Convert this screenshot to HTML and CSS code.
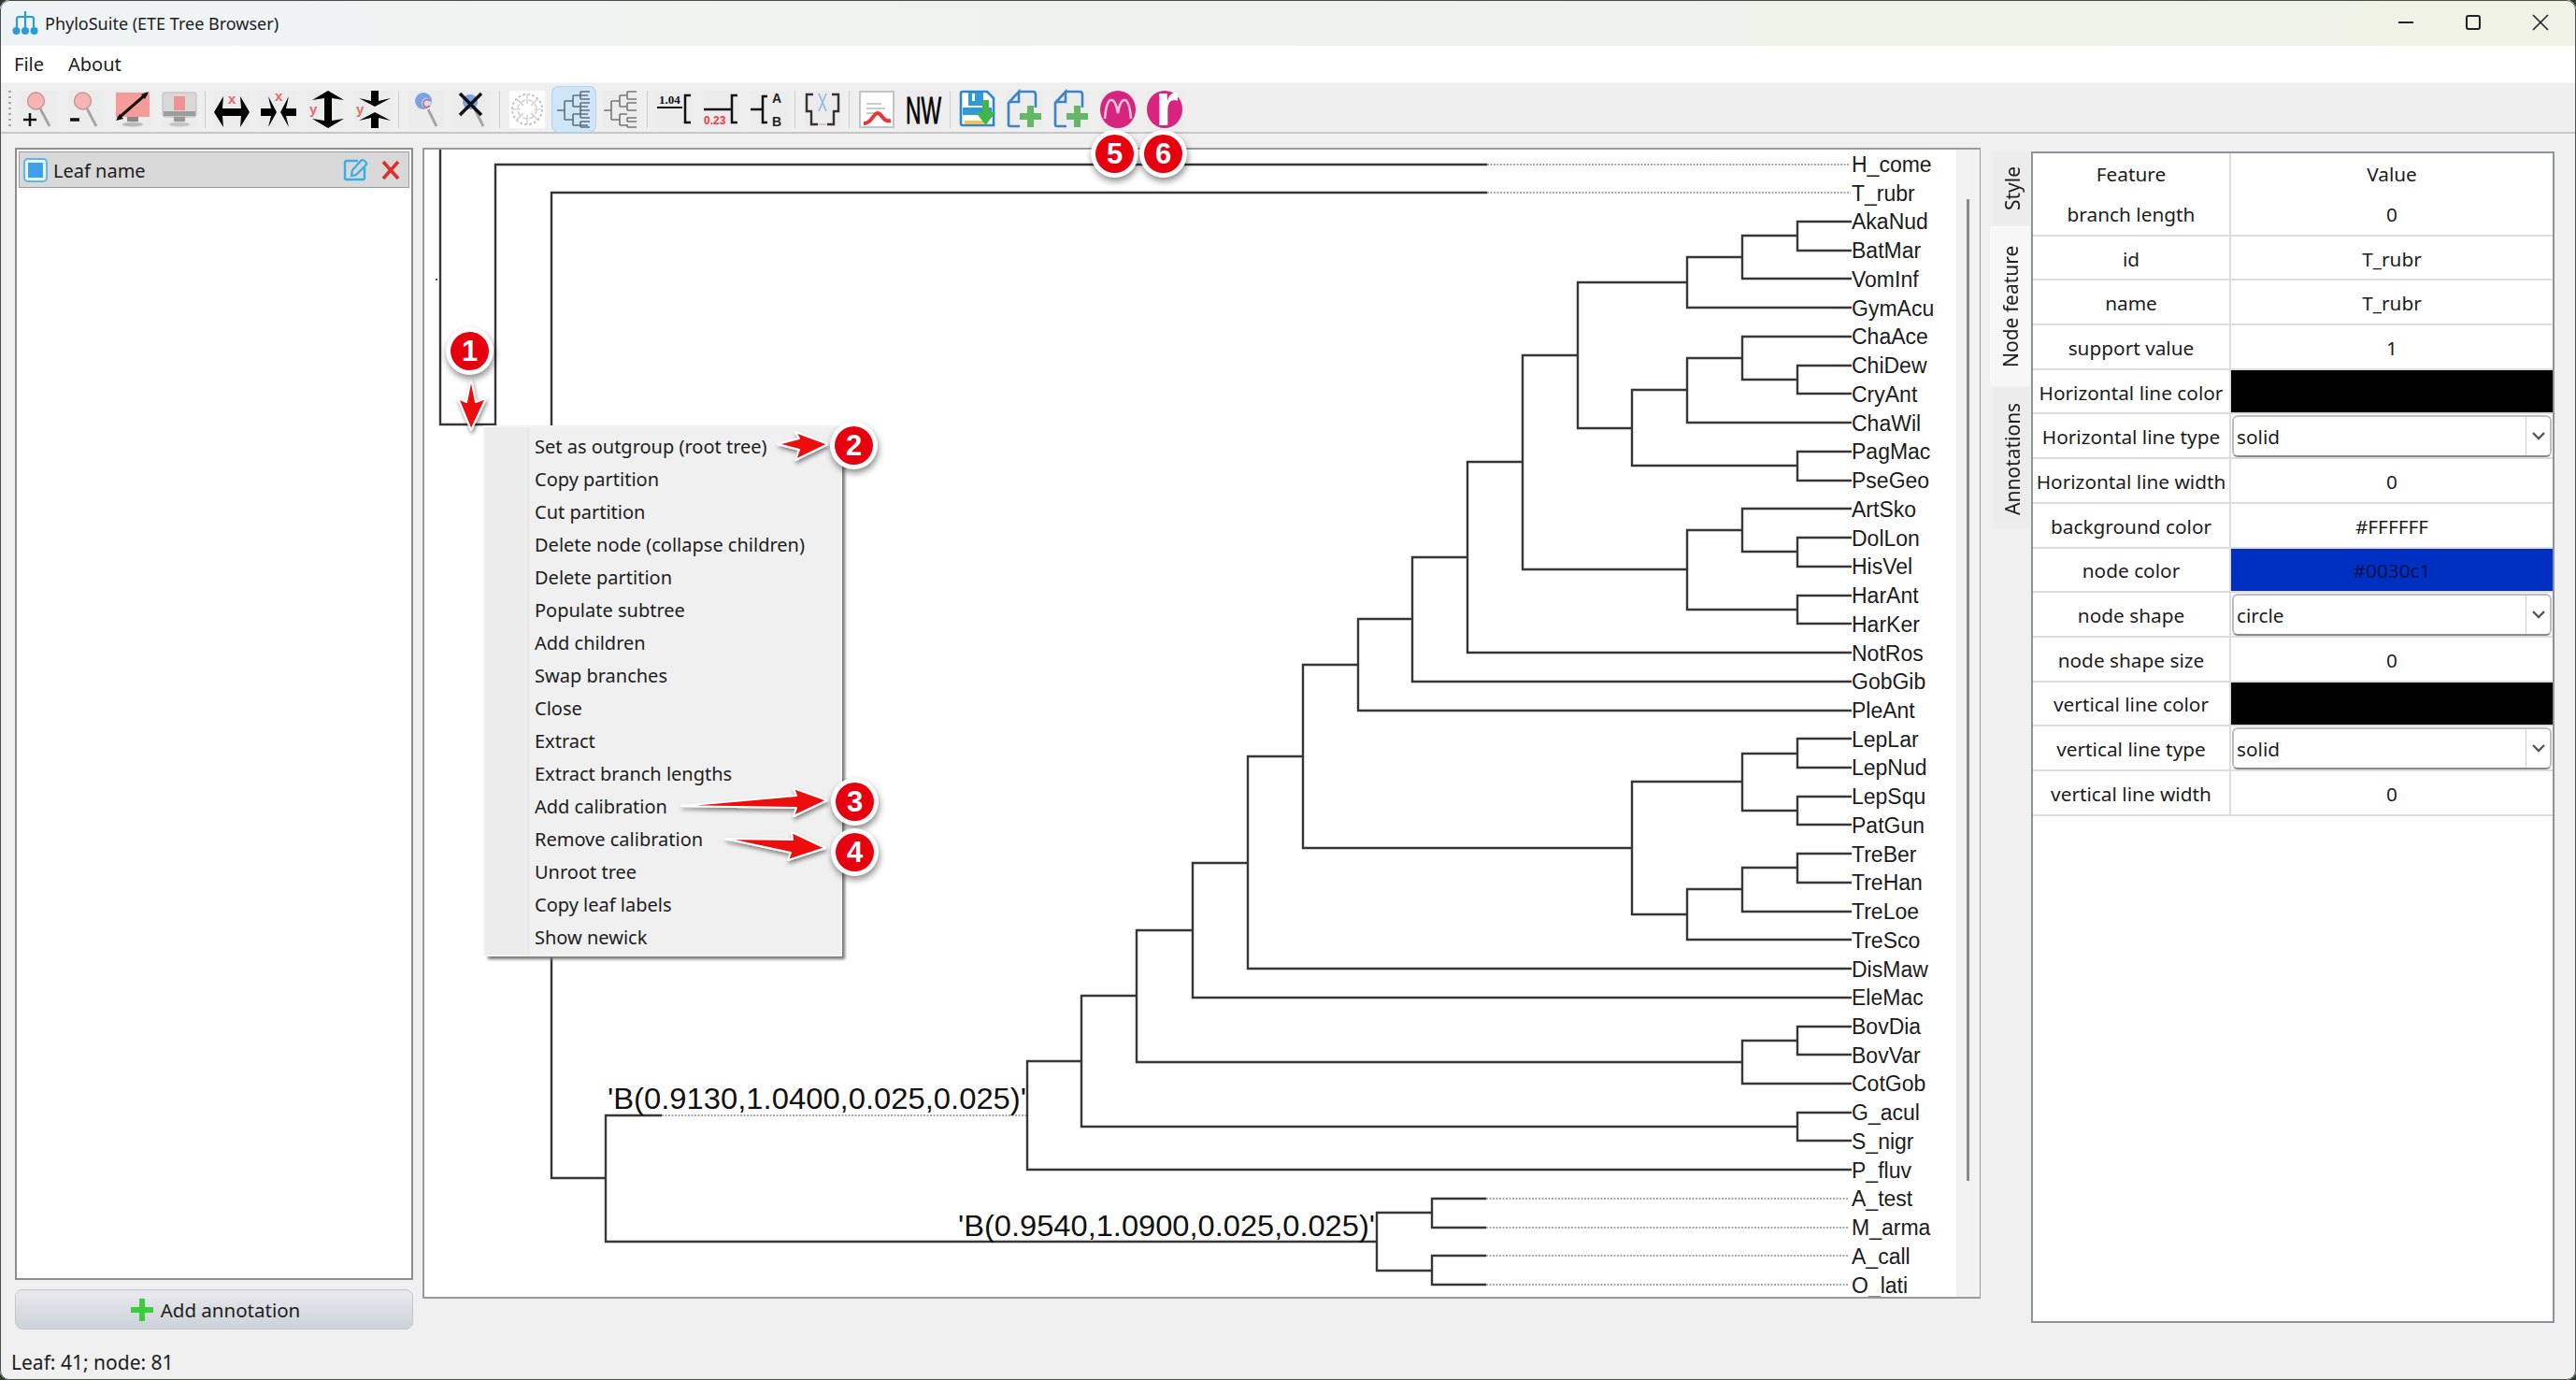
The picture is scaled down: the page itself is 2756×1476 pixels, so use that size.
FILE: index.html
```html
<!DOCTYPE html>
<html lang="en">
<head>
<meta charset="utf-8">
<title>PhyloSuite (ETE Tree Browser)</title>
<link rel="stylesheet" href="styles.css">
</head>
<body>
<div class="window">
  <header class="titlebar">
    <svg class="appicon" viewBox="0 0 28 26" width="28" height="26"><path d="M14 0V5M5 12V8Q5 6 7 6H21Q23 6 23 8V12M5 12V17M14 6V17M23 12V17" fill="none" stroke="#2f9ad8" stroke-width="2.2"/><circle cx="4.5" cy="21" r="4" fill="#2f9ad8"/><circle cx="14" cy="21" r="4" fill="#2f9ad8"/><circle cx="23.5" cy="21" r="4" fill="#2f9ad8"/></svg>
    <span class="title">PhyloSuite (ETE Tree Browser)</span>
    <div class="winbtns">
      <svg viewBox="0 0 18 18" width="18" height="18"><path d="M1 9H17" stroke="#222" stroke-width="2"/></svg>
      <svg viewBox="0 0 18 18" width="18" height="18"><rect x="2" y="2" width="14" height="14" rx="2" fill="none" stroke="#222" stroke-width="2"/></svg>
      <svg viewBox="0 0 18 18" width="18" height="18"><path d="M1 1L17 17M17 1L1 17" stroke="#222" stroke-width="1.6"/></svg>
    </div>
  </header>
  <nav class="menubar"><span>File</span><span>About</span></nav>
  <div class="toolbar">
    <div class="grip"></div>
    <svg class="ico" viewBox="0 0 38 40"><path d="M20 19L30 38" stroke="#a4a4a4" stroke-width="2.8"/><circle cx="15.5" cy="11" r="9" fill="#f8b4b0" stroke="#c99492" stroke-width="1.4"/><path d="M9 24V38M2 31H16" stroke="#111" stroke-width="2.5"/></svg>
    <svg class="ico" viewBox="0 0 38 40"><path d="M20 19L30 38" stroke="#a4a4a4" stroke-width="2.8"/><circle cx="15.5" cy="11" r="9" fill="#f8b4b0" stroke="#c99492" stroke-width="1.4"/><path d="M2 31H12" stroke="#111" stroke-width="3.5"/></svg>
    <svg class="ico" viewBox="0 0 38 40"><rect x="1" y="2" width="36" height="26" fill="#f59c9a"/><rect x="13" y="28" width="12" height="5" fill="#888"/><ellipse cx="19" cy="36" rx="11" ry="2.5" fill="#bbb"/><path d="M3 30L34 3" stroke="#111" stroke-width="3"/><path d="M1 32L9 30L5 25ZM36 1L28 4L32 9Z" fill="#111"/></svg>
    <svg class="ico" viewBox="0 0 38 40"><rect x="1" y="2" width="36" height="26" rx="2" fill="#d8d8d8" stroke="#bbb"/><rect x="13" y="6" width="12" height="15" fill="#ef9493"/><rect x="2" y="22" width="34" height="5" fill="#9c9c9c"/><rect x="13" y="28" width="12" height="5" fill="#999"/><ellipse cx="19" cy="36" rx="11" ry="2.5" fill="#c4c4c4"/></svg>
    <div class="sep tight"></div>
    <svg class="ico" viewBox="0 0 38 40"><path d="M0 23L10 6L9 19H29L28 6L38 23L28 39L29 27H9L10 39Z" fill="#000"/><text class="glyph" x="15" y="14" fill="#e26a6a">x</text></svg>
    <svg class="ico" viewBox="0 0 38 40"><path d="M0 19H11L8 6L17 23L8 39L11 27H0ZM38 19H27L30 6L21 23L30 39L27 27H38Z" fill="#000"/><text class="glyph" x="15" y="11" fill="#e26a6a">x</text></svg>
    <svg class="ico" viewBox="0 0 38 40"><path d="M22 0L5 10L18 8V32L5 30L22 40L39 30L26 32V8L39 10Z" fill="#000"/><text class="glyph" x="2" y="25" fill="#e26a6a">y</text></svg>
    <svg class="ico" viewBox="0 0 38 40"><path d="M18 0V11L5 8L22 17L39 8L26 11V0ZM18 40V29L5 32L22 23L39 32L26 29V40Z" fill="#000"/><text class="glyph" x="2" y="25" fill="#e26a6a">y</text></svg>
    <div class="sep"></div>
    <svg class="ico" viewBox="0 0 38 40"><path d="M21 20L30 38" stroke="#a4a4a4" stroke-width="2.8"/><circle cx="16" cy="11" r="9" fill="#7aa3e4"/><circle cx="19" cy="13" r="5" fill="#cfdcf3"/><path d="M23 11A4 4 0 1 0 23 16" fill="none" stroke="#d45a6a" stroke-width="1.5"/></svg>
    <svg class="ico" viewBox="0 0 38 40"><path d="M21 20L30 38" stroke="#a4a4a4" stroke-width="2.8"/><circle cx="16" cy="12" r="8" fill="#7aa3e4"/><path d="M5 3L28 26M28 3L5 26" stroke="#111" stroke-width="3.5"/></svg>
    <div class="sep"></div>
    <svg class="ico brain" viewBox="0 0 38 40"><circle cx="19" cy="20" r="16" fill="none" stroke="#c8c8c8" stroke-width="2" stroke-dasharray="3 2"/><circle cx="19" cy="20" r="10" fill="none" stroke="#cfcfcf" stroke-width="1.5" stroke-dasharray="5 3"/><path d="M19 4V14M19 26V36M3 20H12M26 20H35M8 9L15 16M30 9L23 16M8 31L15 24M30 31L23 24" stroke="#c8c8c8" stroke-width="1.2"/></svg>
    <svg class="ico sel" viewBox="0 0 38 40"><path d="M1 21H9M9 11V31M9 11H18M9 31H18M18 5V17M18 25V37M18 5H34M18 17H34M18 25H34M18 37H34M26 1V9M26 13V21M26 21V29M26 33V39M26 1H36M26 9H36M26 13H36M26 21H36M26 29H36M26 33H36M26 39H36" fill="none" stroke="#5f7078" stroke-width="1.6"/></svg>
    <svg class="ico" viewBox="0 0 38 40"><path d="M1 21H9M9 11V31M9 11H18M9 31H18M18 5V17M18 25V37M18 5H26M18 17H26M18 25H26M18 37H26M26 1V9M26 13V21M26 29V33M26 39V36M26 1H36M26 9H36M26 13H36M26 21H36M26 29H36M26 33H36M26 39H36" fill="none" stroke="#777" stroke-width="1.6"/></svg>
    <div class="sep"></div>
    <svg class="ico" viewBox="0 0 38 40"><text class="num" x="2" y="14">1.04</text><path d="M0 18H27" stroke="#111" stroke-width="2"/><path d="M36 5H30V34H36" fill="none" stroke="#111" stroke-width="2.5"/></svg>
    <svg class="ico" viewBox="0 0 38 40"><path d="M0 20H30" stroke="#111" stroke-width="2.5"/><text class="num red" x="0" y="36">0.23</text><path d="M36 5H30V34H36" fill="none" stroke="#111" stroke-width="2.5"/></svg>
    <svg class="ico" viewBox="0 0 38 40"><path d="M0 20H12M18 6H13V34H18" fill="none" stroke="#111" stroke-width="2.5"/><text class="ab" x="23" y="13">A</text><text class="ab" x="23" y="38">B</text></svg>
    <div class="sep"></div>
    <svg class="ico" viewBox="0 0 38 40"><path d="M9 4H2V22H7V36H14M29 4H36V22H31V36H24" fill="none" stroke="#333" stroke-width="2.4"/><path d="M15 3L23 22M23 3L15 22" stroke="#8ab8e8" stroke-width="1.6"/><path d="M15 36H23" stroke="#d8b8b8" stroke-width="1.5"/></svg>
    <div class="sep"></div>
    <svg class="ico" viewBox="0 0 38 40"><rect x="1" y="1" width="36" height="38" fill="#fff" stroke="#c4c4c4" stroke-width="2"/><path d="M8 14H24M8 19H28M8 24H20" stroke="#ccc" stroke-width="2"/><path d="M5 35C14 35 15 24 20 24C25 24 25 34 34 32" fill="none" stroke="#e8343a" stroke-width="4"/></svg>
    <svg class="ico" viewBox="0 0 38 40"><text class="nw" x="0" y="35" textLength="38" lengthAdjust="spacingAndGlyphs">NW</text></svg>
    <div class="sep"></div>
    <svg class="ico" viewBox="0 0 38 40"><path d="M3 1H29L36 8V37H3Q1 37 1 35V3Q1 1 3 1Z" fill="#fff" stroke="#2f86cc" stroke-width="2.6"/><rect x="9" y="2" width="16" height="14" fill="#2f9ad8"/><rect x="13" y="3" width="3" height="8" fill="#fff"/><rect x="3" y="18" width="31" height="8" fill="#2f9ad8"/><rect x="5" y="32" width="20" height="4" fill="#f3c25a"/><path d="M24 10H31V23H38L27.5 37L17 23H24Z" fill="#43b649"/></svg>
    <svg class="ico" viewBox="0 0 38 40"><path d="M13 1H28Q31 1 31 4V18M14 38H4Q2 38 2 36V13L13 1V12H2" fill="none" stroke="#3c84c6" stroke-width="2.6"/><path d="M22 16H29V24H37V31H29V39H22V31H14V24H22Z" fill="#62b768"/></svg>
    <svg class="ico" viewBox="0 0 38 40"><path d="M13 1H28Q31 1 31 4V18M14 38H4Q2 38 2 36V13L13 1V12H2" fill="none" stroke="#3c84c6" stroke-width="2.6"/><path d="M22 16H29V24H37V31H29V39H22V31H14V24H22Z" fill="#62b768"/></svg>
    <svg class="ico" viewBox="0 0 38 40"><ellipse cx="19" cy="20" rx="19" ry="20" fill="#d6247f"/><path d="M5 30C6 18 8 10 12 10C16 10 18 18 19 24C20 18 22 10 26 10C30 10 32 18 33 30" fill="none" stroke="#f4c6dc" stroke-width="2.6"/></svg>
    <svg class="ico" viewBox="0 0 38 40"><ellipse cx="19" cy="20" rx="19" ry="20" fill="#d6247f"/><text class="rlogo" x="9" y="37">r</text></svg>
  </div>

  <main class="main">
    <section class="leftcol">
      <div class="annolist">
        <div class="annorow">
          <span class="check"><i></i></span>
          <span class="annoname">Leaf name</span>
          <svg class="editicon" viewBox="0 0 27 24" width="27" height="24"><path d="M16 2H4Q2 2 2 4V20Q2 22 4 22H21Q23 22 23 20V9" fill="none" stroke="#36aee8" stroke-width="2.4"/><path d="M10 12L19 2Q21 0 24 3Q26 5 24 7L14 17L9 18Z" fill="none" stroke="#36aee8" stroke-width="2.2"/></svg>
          <svg class="delicon" viewBox="0 0 20 20" width="20" height="20"><path d="M2 1L18 19M18 1L2 19" stroke="#d9302b" stroke-width="3.6"/></svg>
        </div>
      </div>
      <button class="addbtn"><svg viewBox="0 0 26 26" width="26" height="26"><path d="M10 1H16V10H25V16H16V25H10V16H1V10H10Z" fill="#3ccc3c"/></svg>Add annotation</button>
    </section>

    <section class="treepanel">
      <svg class="tree" width="1639" height="1227" viewBox="454 160 1639 1227">
        <rect x="466" y="298" width="2" height="2" fill="#555"/>
        <path class="dots" d="M1591 176H1980M1591 206H1980M708 1193H1098M1590 1282H1978M1590 1313H1978M1590 1343H1978M1590 1374H1978"/>
        <path class="branches" d="M1981 237H1923V268H1981M1923 252H1864V298H1981M1864 275H1805V329H1981M1981 391H1923V421H1981M1981 360H1864V406H1923M1864 383H1805V452H1981M1981 483H1923V514H1981M1805 417H1746V498H1923M1805 302H1688V458H1746M1981 575H1923V606H1981M1981 544H1864V590H1923M1981 637H1923V667H1981M1864 567H1805V652H1923M1688 380H1629V609H1805M1629 494H1570V698H1981M1570 596H1511V729H1981M1511 662H1453V760H1981M1981 790H1923V821H1981M1981 852H1923V882H1981M1923 806H1864V867H1923M1981 913H1923V944H1981M1923 928H1864V975H1981M1864 951H1805V1005H1981M1864 836H1746V978H1805M1453 711H1394V907H1746M1394 809H1335V1036H1981M1335 923H1276V1067H1981M1981 1098H1923V1128H1981M1923 1113H1864V1159H1981M1276 995H1216V1136H1864M1981 1190H1923V1220H1981M1216 1065H1157V1205H1923M1157 1135H1099V1251H1981M1590 1282H1532V1313H1590M1590 1343H1532V1374H1590M1532 1297H1473V1359H1532M708 1193H648V1328H1473M1099 1193H1098M648 1260H590V206H1591M590 733H530V176H1591M530 454H471V160"/>
        <g class="leaves">
          <text x="1981" y="184">H_come</text><text x="1981" y="215">T_rubr</text><text x="1981" y="245">AkaNud</text><text x="1981" y="276">BatMar</text><text x="1981" y="307">VomInf</text><text x="1981" y="338">GymAcu</text><text x="1981" y="368">ChaAce</text><text x="1981" y="399">ChiDew</text><text x="1981" y="430">CryAnt</text><text x="1981" y="461">ChaWil</text><text x="1981" y="491">PagMac</text><text x="1981" y="522">PseGeo</text><text x="1981" y="553">ArtSko</text><text x="1981" y="584">DolLon</text><text x="1981" y="614">HisVel</text><text x="1981" y="645">HarAnt</text><text x="1981" y="676">HarKer</text><text x="1981" y="707">NotRos</text><text x="1981" y="737">GobGib</text><text x="1981" y="768">PleAnt</text><text x="1981" y="799">LepLar</text><text x="1981" y="829">LepNud</text><text x="1981" y="860">LepSqu</text><text x="1981" y="891">PatGun</text><text x="1981" y="922">TreBer</text><text x="1981" y="952">TreHan</text><text x="1981" y="983">TreLoe</text><text x="1981" y="1014">TreSco</text><text x="1981" y="1045">DisMaw</text><text x="1981" y="1075">EleMac</text><text x="1981" y="1106">BovDia</text><text x="1981" y="1137">BovVar</text><text x="1981" y="1167">CotGob</text><text x="1981" y="1198">G_acul</text><text x="1981" y="1229">S_nigr</text><text x="1981" y="1260">P_fluv</text><text x="1981" y="1290">A_test</text><text x="1981" y="1321">M_arma</text><text x="1981" y="1352">A_call</text><text x="1981" y="1383">O_lati</text>
        </g>
        <text class="calib" x="650" y="1186" textLength="448" lengthAdjust="spacingAndGlyphs">'B(0.9130,1.0400,0.025,0.025)'</text>
        <text class="calib" x="1025" y="1322" textLength="446" lengthAdjust="spacingAndGlyphs">'B(0.9540,1.0900,0.025,0.025)'</text>
      </svg>
      <div class="scrolltrack"><div class="scrollthumb"></div></div>
    </section>

    <aside class="rightcol">
      <div class="tabs">
        <div class="tab t-style">Style</div>
        <div class="tab t-node active">Node feature</div>
        <div class="tab t-anno">Annotations</div>
      </div>
      <div class="props">
        <div class="row head"><div class="k">Feature</div><div class="v">Value</div></div>
        <div class="row"><div class="k">branch length</div><div class="v">0</div></div>
        <div class="row"><div class="k">id</div><div class="v">T_rubr</div></div>
        <div class="row"><div class="k">name</div><div class="v">T_rubr</div></div>
        <div class="row"><div class="k">support value</div><div class="v">1</div></div>
        <div class="row"><div class="k">Horizontal line color</div><div class="v black"></div></div>
        <div class="row"><div class="k">Horizontal line type</div><div class="v boxed"><div class="combo"><span>solid</span><i class="drop"><svg viewBox="0 0 14 10" width="14" height="10"><path d="M1 2L7 8L13 2" fill="none" stroke="#555" stroke-width="2.4"/></svg></i></div></div></div>
        <div class="row"><div class="k">Horizontal line width</div><div class="v">0</div></div>
        <div class="row"><div class="k">background color</div><div class="v">#FFFFFF</div></div>
        <div class="row"><div class="k">node color</div><div class="v blue">#0030c1</div></div>
        <div class="row"><div class="k">node shape</div><div class="v boxed"><div class="combo"><span>circle</span><i class="drop"><svg viewBox="0 0 14 10" width="14" height="10"><path d="M1 2L7 8L13 2" fill="none" stroke="#555" stroke-width="2.4"/></svg></i></div></div></div>
        <div class="row"><div class="k">node shape size</div><div class="v">0</div></div>
        <div class="row"><div class="k">vertical line color</div><div class="v black"></div></div>
        <div class="row"><div class="k">vertical line type</div><div class="v boxed"><div class="combo"><span>solid</span><i class="drop"><svg viewBox="0 0 14 10" width="14" height="10"><path d="M1 2L7 8L13 2" fill="none" stroke="#555" stroke-width="2.4"/></svg></i></div></div></div>
        <div class="row"><div class="k">vertical line width</div><div class="v">0</div></div>
      </div>
    </aside>
  </main>

  <footer class="statusbar">Leaf: 41; node: 81</footer>

  <ul class="ctxmenu">
    <li>Set as outgroup (root tree)</li>
    <li>Copy partition</li>
    <li>Cut partition</li>
    <li>Delete node (collapse children)</li>
    <li>Delete partition</li>
    <li>Populate subtree</li>
    <li>Add children</li>
    <li>Swap branches</li>
    <li>Close</li>
    <li>Extract</li>
    <li>Extract branch lengths</li>
    <li>Add calibration</li>
    <li>Remove calibration</li>
    <li>Unroot tree</li>
    <li>Copy leaf labels</li>
    <li>Show newick</li>
  </ul>

  <svg class="arrows" width="2756" height="1476" viewBox="0 0 2756 1476">
    <defs><filter id="sh" x="-30%" y="-30%" width="160%" height="170%"><feDropShadow dx="1" dy="3" stdDeviation="2" flood-color="#000" flood-opacity=".45"/></filter></defs>
    <g filter="url(#sh)" fill="#ee0c0c" stroke="#fff" stroke-width="2" stroke-linejoin="round">
      <path d="M504 405L509 430L520 426L504 460L490 426L499 430Z"/>
      <path d="M832 475L855 469L851 462L886 475L851 492L855 481Z"/>
      <path d="M729 862L852 851L849 843L885 856L849 873L852 864Z"/>
      <path d="M776 897L848 898L847 890L883 907L843 920L846 912Z"/>
    </g>
  </svg>
  <span class="badge b1">1</span>
  <span class="badge b2">2</span>
  <span class="badge b3">3</span>
  <span class="badge b4">4</span>
  <span class="badge b5">5</span>
  <span class="badge b6">6</span>
</div>
</body>
</html>
```

FILE: styles.css
```css
* { box-sizing: border-box; }
html, body { margin: 0; height: 100%; }
body {
  background: #2c3a2e;
  overflow: hidden;
  font-family: "Noto Sans", "Open Sans", sans-serif;
  color: #1c1c1c;
  font-size: 20px;
}
.window {
  position: relative;
  height: 100vh;
  width: 100vw;
  display: flex;
  flex-direction: column;
  background: #f0f0f0;
  border-radius: 10px;
  overflow: hidden;
}
.window::after {
  content: "";
  position: absolute;
  inset: 0;
  border: 1px solid #4a4f4a;
  border-radius: 10px;
  pointer-events: none;
}

/* title bar */
.titlebar {
  height: 49px;
  flex: none;
  display: flex;
  align-items: center;
  padding-left: 13px;
  background: linear-gradient(90deg, #eef4f5, #f0f2e5);
}
.appicon { margin-right: 7px; }
.title { font-size: 18px; }
.winbtns {
  margin-left: auto;
  display: flex;
  gap: 54px;
  padding-right: 29px;
  margin-top: -2px;
}

/* menu */
.menubar {
  height: 39px;
  flex: none;
  background: #fff;
  display: flex;
  align-items: center;
  gap: 26px;
  padding-left: 15px;
  font-size: 20px;
}

/* toolbar */
.toolbar {
  height: 55px;
  flex: none;
  display: flex;
  align-items: flex-start;
  gap: 12px;
  padding: 8px 0 0 9px;
  background: #efefef;
  border-bottom: 2px solid #c6c6c6;
  border-top: 1px solid #f6f6f6;
}
.grip {
  width: 3px;
  height: 40px;
  margin-right: -1px;
  background: repeating-linear-gradient(180deg, #aaa 0 2px, transparent 2px 6px);
}
.ico { width: 38px; height: 40px; flex: none; background: #ececec; overflow: visible; }
.ico.brain { background: #fff; }
.ico.sel {
  background: #cfe6f9;
  border-radius: 3px;
  box-shadow: 0 0 0 4px #cfe6f9, 0 0 0 5px #aed4f2;
}
.sep {
  width: 1px;
  height: 40px;
  flex: none;
  background: #cfcfcf;
  margin: 0 -2px 0 -3px;
}
.sep.tight { margin: 0 -3px 0 -4px; }
.glyph { font: 700 15px "Liberation Sans", sans-serif; }
.num { font: 700 13px "Liberation Serif", serif; fill: #111; }
.num.red { fill: #f03a3a; font-family: "Liberation Sans", sans-serif; font-size: 12px; }
.ab { font: 700 14px "Liberation Sans", sans-serif; fill: #222; }
.nw { font: 400 40px "Liberation Sans", sans-serif; fill: #000; stroke: #000; stroke-width: .8px; }
.rlogo { font: 700 64px "Liberation Sans", sans-serif; fill: #fff; }

/* main area */
.main {
  flex: 1;
  min-height: 0;
  display: flex;
  align-items: flex-start;
  padding: 15px 0 0 16px;
}
.leftcol {
  width: 426px;
  flex: none;
  display: flex;
  flex-direction: column;
  gap: 10px;
  margin-right: 10px;
}
.annolist {
  height: 1211px;
  background: #fff;
  border: 2px solid #8e8e8e;
  padding: 2px;
}
.annorow {
  height: 39px;
  background: #d8d8d8;
  border: 1px solid #9c9c9c;
  display: flex;
  align-items: center;
  padding: 0 9px 0 4px;
}
.check {
  width: 26px;
  height: 26px;
  border: 2px solid #5fb4e8;
  border-radius: 5px;
  padding: 3px;
  background: #eaf4fb;
  margin-right: 6px;
}
.check i { display: block; width: 100%; height: 100%; background: #3fa0e8; }
.annoname { font-size: 20px; flex: 1; padding-top: 1px; }
.editicon { margin-right: 14px; }
.addbtn {
  height: 43px;
  display: flex;
  align-items: center;
  justify-content: center;
  gap: 7px;
  border: 1px solid #c2c6cb;
  border-radius: 8px;
  background: linear-gradient(180deg, #e8eaee, #ccd2d9);
  font: inherit;
  font-size: 20.5px;
  color: inherit;
  padding: 0 0 0 2px;
}

/* tree */
.treepanel {
  width: 1667px;
  height: 1231px;
  flex: none;
  display: flex;
  background: #fff;
  border: 2px solid #9a9a9a;
  border-right-width: 1px;
}
.tree { flex: none; display: block; }
.branches { fill: none; stroke: #363636; stroke-width: 2.4; }
.dots { fill: none; stroke: #aaa; stroke-width: 2; stroke-dasharray: 2 1.5; }
.leaves text { font: 400 23px "Liberation Sans", Arial, sans-serif; fill: #1c1c1c; }
.calib { font: 400 32px "Liberation Sans", Arial, sans-serif; fill: #111; }
.scrolltrack {
  flex: 1;
  background: #f2f2f2;
  padding: 53px 0 0 11px;
}
.scrollthumb { width: 3px; height: 1050px; background: #8a8a8a; }

/* right column */
.rightcol {
  flex: none;
  display: flex;
  margin: 4px 0 0 10px;
}
.tabs {
  width: 44px;
  display: flex;
  flex-direction: column;
  align-items: flex-end;
  gap: 2px;
  padding-right: 1px;
}
.tab {
  width: 39px;
  writing-mode: vertical-rl;
  transform: rotate(180deg);
  display: flex;
  align-items: center;
  justify-content: center;
  background: #ececec;
  font-size: 21px;
}
.t-style { height: 78px; }
.t-node { height: 171px; }
.t-anno { height: 151px; }
.tab.active { width: 43px; background: #f7f7f7; }
.props {
  width: 560px;
  height: 1253px;
  background: #fff;
  border: 2px solid #8f9296;
  font-size: 20.8px;
}
.row {
  height: 47.7px;
  display: flex;
  border-bottom: 2px solid #dcdcdc;
}
.row.head { height: 41px; border-bottom: 0; }
.k, .v {
  display: flex;
  align-items: center;
  justify-content: center;
  white-space: nowrap;
  padding-top: 2px;
}
.k { width: 212px; flex: none; border-right: 2px solid #dcdcdc; }
.v { flex: 1; min-width: 0; }
.v.boxed { padding-top: 0; }
.v.black { background: #000; }
.v.blue { background: #0030c1; color: #04104f; }
.combo {
  width: 100%;
  height: 45px;
  margin: 0 1px;
  display: flex;
  align-items: center;
  background: #fff;
  border: 2px solid #bdbdbd;
  border-bottom-color: #8a8a8a;
  border-radius: 6px;
  padding-left: 3px;
}
.combo span { flex: 1; padding-top: 1px; }
.drop {
  width: 26px;
  height: 100%;
  border-left: 1px solid #d0d0d0;
  display: flex;
  align-items: center;
  justify-content: center;
}

/* status */
.statusbar {
  height: 38px;
  flex: none;
  display: flex;
  align-items: center;
  padding-left: 12px;
  font-size: 21px;
}

/* context menu */
.ctxmenu {
  position: absolute;
  left: 517px;
  top: 455px;
  width: 384px;
  height: 568px;
  margin: 0;
  padding: 3px 0 0 0;
  list-style: none;
  background: linear-gradient(90deg, #ececec 0 46px, #e4e4e4 46px 47px, #f0f0f0 47px);
  border: 2px solid #f4f4f4;
  box-shadow: 4px 4px 3px -1px #777;
}
.ctxmenu li {
  height: 35px;
  display: flex;
  align-items: center;
  padding-left: 53px;
  font-size: 20px;
}

/* annotations */
.arrows {
  position: absolute;
  left: 0;
  top: 0;
  pointer-events: none;
}
.badge {
  position: absolute;
  width: 41px;
  height: 41px;
  border-radius: 50%;
  background: #e6000f;
  box-shadow: 0 0 0 5px #fff, 1px 4px 7px 5px rgba(0, 0, 0, .45);
  color: #fff;
  font: 700 31px/41px "Liberation Sans", Arial, sans-serif;
  text-align: center;
}
.b1 { left: 482px; top: 355px; }
.b2 { left: 893px; top: 456px; }
.b3 { left: 894px; top: 837px; }
.b4 { left: 894px; top: 891px; }
.b5 { left: 1172px; top: 144px; }
.b6 { left: 1224px; top: 144px; }
```
